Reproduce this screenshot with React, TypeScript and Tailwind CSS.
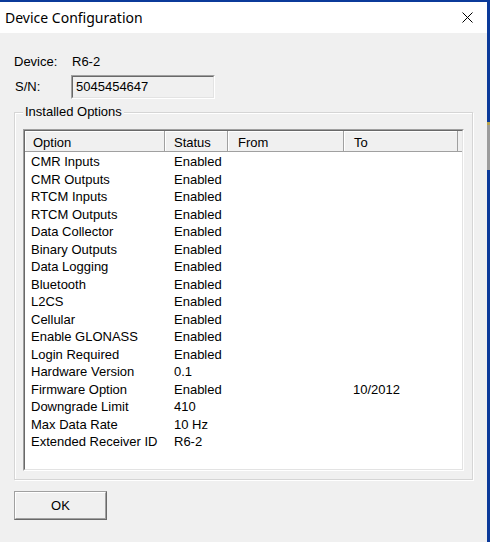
import React from 'react'

const options: [string, string, string, string][] = [
  ['CMR Inputs', 'Enabled', '', ''],
  ['CMR Outputs', 'Enabled', '', ''],
  ['RTCM Inputs', 'Enabled', '', ''],
  ['RTCM Outputs', 'Enabled', '', ''],
  ['Data Collector', 'Enabled', '', ''],
  ['Binary Outputs', 'Enabled', '', ''],
  ['Data Logging', 'Enabled', '', ''],
  ['Bluetooth', 'Enabled', '', ''],
  ['L2CS', 'Enabled', '', ''],
  ['Cellular', 'Enabled', '', ''],
  ['Enable GLONASS', 'Enabled', '', ''],
  ['Login Required', 'Enabled', '', ''],
  ['Hardware Version', '0.1', '', ''],
  ['Firmware Option', 'Enabled', '', '10/2012'],
  ['Downgrade Limit', '410', '', ''],
  ['Max Data Rate', '10 Hz', '', ''],
  ['Extended Receiver ID', 'R6-2', '', ''],
]

// Classic sunken 2px edge (listview, textbox)
function Sunken({ className, children }: { className?: string; children: React.ReactNode }) {
  return (
    <div className={'border border-t-[#a0a0a0] border-l-[#a0a0a0] border-b-white border-r-white ' + (className ?? '')}>
      <div className="flex h-full flex-col border border-t-[#696969] border-l-[#696969] border-b-[#e3e3e3] border-r-[#e3e3e3]">
        {children}
      </div>
    </div>
  )
}

function HeaderCell({ w, pl, children }: { w: string; pl: string; children?: React.ReactNode }) {
  return (
    <div
      className={
        'h-[21px] shrink-0 border-r border-b border-r-[#a0a0a0] border-b-[#a0a0a0] pt-[3px] leading-[17px] shadow-[inset_1px_1px_0_#fff] ' +
        w +
        ' ' +
        pl
      }
    >
      {children}
    </div>
  )
}

export default function App() {
  return (
    <div className="flex h-[542px] w-[490px] bg-[#0b3a9a] font-['Liberation_Sans',Arial,sans-serif] text-[13px] text-black">
      <div className="mt-[2px] flex w-[487px] flex-col">
        {/* Title bar */}
        <div className="flex h-[31px] shrink-0 items-center justify-between bg-white pr-[14px] pl-[5px]">
          <span className="font-['Noto_Sans',sans-serif] text-[14px] leading-none">Device Configuration</span>
          <svg width="11" height="11" viewBox="0 0 11 11" aria-hidden="true">
            <path d="M0.5 0.5 L10.5 10.5 M10.5 0.5 L0.5 10.5" stroke="#000" strokeWidth="1" fill="none" />
          </svg>
        </div>

        {/* Body */}
        <div className="flex flex-1 flex-col bg-[#f0f0f0] px-[14px] pt-[20px]">
          <div className="flex h-[18px] items-center leading-[18px]">
            <span className="w-[58px]">Device:</span>
            <span>R6-2</span>
          </div>

          <div className="mt-[4px] flex items-center">
            <span className="w-[57px] pl-px">S/N:</span>
            <Sunken className="h-[24px] w-[144px]">
              <div className="flex h-full items-center bg-[#f0f0f0] pl-[3px] leading-[18px]">5045454647</div>
            </Sunken>
          </div>

          {/* Installed Options group */}
          <fieldset className="mt-[6px] border border-[#d5d5d5] px-[8px] pb-[8px] shadow-[inset_1px_1px_0_#fff,1px_1px_0_#fff]">
            <legend className="h-[14px] bg-[#f0f0f0] px-[2px] leading-[14px]">Installed Options</legend>

            <Sunken className="mt-[10px] h-[342px]">
              <div className="flex h-full flex-col bg-white">
                <div className="flex bg-[#f0f0f0]">
                  <HeaderCell w="w-[140px]" pl="pl-[8px]">Option</HeaderCell>
                  <HeaderCell w="w-[63px]" pl="pl-[9px]">Status</HeaderCell>
                  <HeaderCell w="w-[116px]" pl="pl-[10px]">From</HeaderCell>
                  <HeaderCell w="w-[114px]" pl="pl-[10px]">To</HeaderCell>
                  <div className="h-[21px] flex-1 border-b border-b-[#a0a0a0]" />
                </div>

                <div className="pt-px">
                  {options.map(([opt, status, from, to]) => (
                    <div key={opt} className="flex h-[17.5px] leading-[17.5px]">
                      <span className="w-[140px] shrink-0 pl-[6px]">{opt}</span>
                      <span className="w-[63px] shrink-0 pl-[9px]">{status}</span>
                      <span className="w-[116px] shrink-0 pl-[10px]">{from}</span>
                      <span className="w-[114px] shrink-0 pl-[9px]">{to}</span>
                    </div>
                  ))}
                </div>
              </div>
            </Sunken>
          </fieldset>

          <div className="mt-[11px]">
            <button className="h-[29px] w-[93px] border border-t-[#a0a0a0] border-l-[#a0a0a0] border-b-[#696969] border-r-[#696969] bg-[#e1e1e1] p-0">
              <div className="flex h-full items-center justify-center border border-t-white border-l-white border-b-[#a0a0a0] border-r-[#a0a0a0] bg-[#f0f0f0] leading-[18px]">
                OK
              </div>
            </button>
          </div>
        </div>
      </div>

      {/* Desktop showing at the right edge */}
      <div className="flex flex-1 flex-col">
        <div className="h-[122px]" />
        <div className="h-[3px] bg-[#b9a44c]" />
        <div className="h-[45px] bg-[#9c9c9c]" />
      </div>
    </div>
  )
}
